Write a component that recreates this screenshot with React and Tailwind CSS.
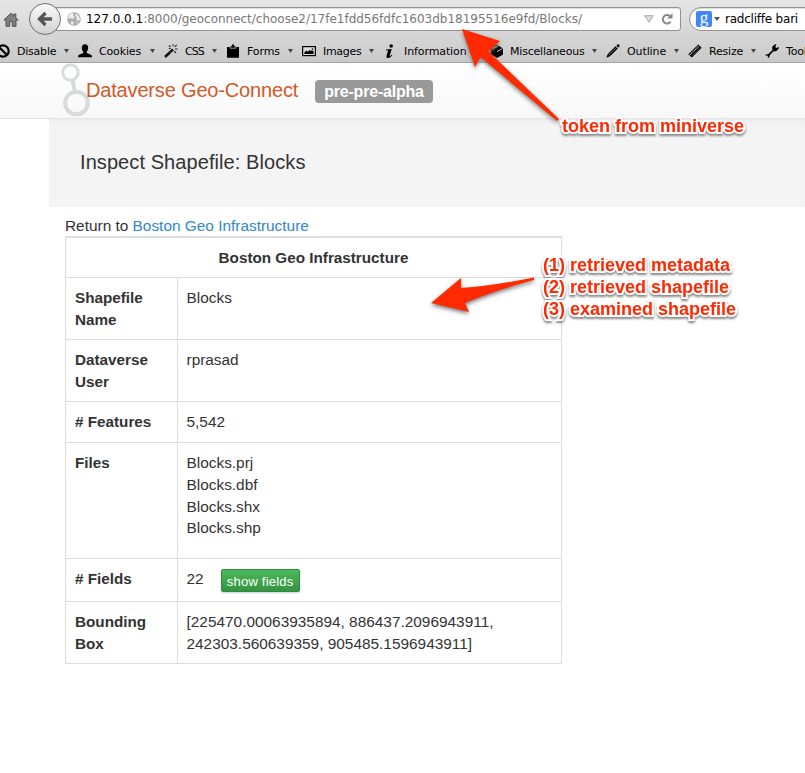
import React from "react";

const Svg = ({ children, className = "", ...rest }) => (
  <svg viewBox="0 0 14 14" width="14" height="14" className={"block shrink-0 overflow-visible " + className} {...rest}>
    {children}
  </svg>
);

const icons = {
  disable: (
    <Svg>
      <circle cx="7" cy="7" r="5.700" fill="none" stroke="#000" strokeWidth="2.200" />
      <path d="M3 3l8 8" stroke="#000" strokeWidth="2.200" />
    </Svg>
  ),
  cookies: (
    <Svg>
      <path d="M7 .2C9 .2 10.300 1.600 10.200 3.800 10.100 5.700 9.500 6.800 8.700 7.800V9L13 10.800C13.700 11.200 14 12 14 13.300H0C0 12 .3 11.200 1 10.800L5.300 9V7.800C4.500 6.800 3.900 5.700 3.800 3.800 3.700 1.600 5 .2 7 .2Z" />
    </Svg>
  ),
  css: (
    <Svg>
      <path d="M1 13L9 5.500" stroke="#111" strokeWidth="2.500" />
      <path d="M6.300 7.700l1.200 1.300" stroke="#ccc" strokeWidth=".7" />
      <path d="M9 .3v2M5 1.500l1.500 1.600M12.700.8l-2 2M11 5h2.600M10.200 7.200l1.800 1.800M4.800 4.500h1.800" stroke="#222" strokeWidth="1.100" />
    </Svg>
  ),
  forms: (
    <Svg>
      <path d="M1 3h2.500l.6 1.600h5.800L10.500 3H13v10.700H1zM4.500 3.800L4 2.500h1.700C5.700 1.200 6 .3 7 .3s1.300.9 1.300 2.200H10l-.5 1.300z" />
    </Svg>
  ),
  images: (
    <Svg>
      <rect x=".6" y="2.600" width="12.800" height="9" fill="#ddd" stroke="#000" strokeWidth="1.200" />
      <path d="M2.300 10V8.500l2-2 1.400 1.200 2-1.700 1.300 1 1-1 1.600 1.600V10z" />
      <circle cx="10.500" cy="5" r=".8" />
    </Svg>
  ),
  information: (
    <Svg>
      <circle cx="8.200" cy="2" r="1.800" />
      <path d="M3.200 5.600L8.800 4.900 6.700 11.300Q6.500 12.300 7.300 11.900L8.800 10.500 9.400 11C7.900 13 6.400 14 4.900 13.900 3.300 13.800 3.200 12.700 3.600 11.500L5.200 6.600 3 6.400Z" />
    </Svg>
  ),
  misc: (
    <Svg>
      <path d="M1.500 4.500L8 .5l6 4v6l-6 3.500-6.500-4z" />
      <path d="M3.500 4.800l6-3M8 7.500l5.500-3" stroke="#ddd" strokeWidth=".9" />
    </Svg>
  ),
  outline: (
    <Svg>
      <path d="M.3 13.800L1.800 10 9.500 2.300 11.800 4.600 4 12.200zM10.300 1.700L11.500.5Q12.500-.1 13.300.8 14 1.600 13.400 2.500L12.400 3.700z" />
      <path d="M2.800 10.800L10 3.600" stroke="#aaa" strokeWidth=".7" />
    </Svg>
  ),
  resize: (
    <Svg>
      <path d="M.3 10.200L10.300.6 13.700 3.800 3.800 13.600z" />
      <path d="M2 10.700L10.700 2.300" stroke="#ddd" strokeWidth="1.200" strokeDasharray="1 .8" />
      <path d="M4 11.800L12.500 3.700" stroke="#777" strokeWidth=".5" />
    </Svg>
  ),
  tools: (
    <Svg>
      <path d="M.5 10.800L3.700 9.700 7.500 6 7.100 3 9.500.6 11.500.2 10.200 2.700 11.500 4 13.800 2.800 13.500 5 11 7.200 8.500 7.200 5 10.700 4 13.800 2.600 13.500 2.900 11.900 2 11.300.7 12.100z" />
    </Svg>
  ),
};

const menu = [
  ["disable", "Disable", "w-[82px]", "tracking-[-0.22px]"],
  ["cookies", "Cookies", "w-[86px]", "tracking-[-0.15px]"],
  ["css", "CSS", "w-[62px]", "tracking-[-0.9px]"],
  ["forms", "Forms", "w-[76px]", "tracking-[-0.1px]"],
  ["images", "Images", "w-[81px]", "tracking-[-0.3px]"],
  ["information", "Information", "w-[106px]", "tracking-[-0.1px]"],
  ["misc", "Miscellaneous", "w-[117px]", "tracking-[-0.2px]"],
  ["outline", "Outline", "w-[82px]", "tracking-[-0.1px]"],
  ["resize", "Resize", "w-[77px]", "tracking-[-0.2px]"],
  ["tools", "Tools", "w-[80px]", "tracking-[-0.2px]"],
];

const Caret = () => (
  <svg width="5" height="4" viewBox="0 0 5 4" className="block shrink-0">
    <path d="M0 0h5L2.500 4z" fill="#444" />
  </svg>
);

function Browser() {
  return (
    <div className="h-[63px] shrink-0 overflow-hidden border-b border-[#a5a5a5] bg-linear-to-b from-[#e6e6e6] to-[#c9c9c9] font-['DejaVu_Sans',sans-serif] text-black">
      <div className="flex h-[38px] items-center">
        <svg width="16" height="15" viewBox="0 0 16 15" className="ml-[3px] shrink-0">
          <path d="M8 1.200L.8 8H3v6.300h3.700V9.500h2.600v4.800H13V8h2.200L12.800 5.700V2h-2v1.800z" fill="#808080" stroke="#505050" strokeWidth="1" />
        </svg>
        <div className="relative z-10 ml-[10px] flex size-8 shrink-0 items-center justify-center rounded-full border border-[#6f6f6f] bg-linear-to-b from-[#fafafa] to-[#d2d2d2]">
          <svg width="16" height="16" viewBox="0 0 16 16">
            <path d="M8.500 2L2.500 8l6 6M3 8h12" fill="none" stroke="#555" strokeWidth="3.300" />
          </svg>
        </div>
        <div className="-ml-[5px] flex h-6 w-[625px] shrink-0 items-center rounded-r-[3px] border border-[#929292] bg-white shadow-[inset_0_1px_1px_#ddd]">
          <svg width="14" height="14" viewBox="0 0 14 14" className="ml-[10px] shrink-0">
            <circle cx="7" cy="7" r="6.800" fill="#aaa" />
            <path d="M2 3l3-2 2 1-1 2 2 1-2 2-3-1-2 1zM9 2l3 2 1 4-2 1-2-2 1-2-2-1zM4 9l3 1-1 3-2-1zM9 10l2 0-1 2z" fill="#eee" />
          </svg>
          <span className="ml-[5px] w-[558px] whitespace-nowrap pt-[2px] text-[12px] tracking-[-0.01px] text-[#777]">
            <span className="text-black">127.0.0.1</span>:8000/geoconnect/choose2/17fe1fdd56fdfc1603db18195516e9fd/Blocks/
          </span>
          <svg width="10" height="8" viewBox="0 0 10 8" className="shrink-0">
            <path d="M.7.700h8.600L5 7.300z" fill="#ddd" stroke="#aaa" />
          </svg>
          <svg width="12" height="12" viewBox="0 0 12 12" className="ml-[7px] shrink-0">
            <path d="M9 3A4.300 4.300 0 1 0 9.800 8.500" fill="none" stroke="#888" strokeWidth="2" />
            <path d="M11.500 0v5.500H6z" fill="#888" />
          </svg>
        </div>
        <div className="ml-[8px] flex h-6 w-[150px] shrink-0 items-center rounded-l-full border border-[#929292] bg-white shadow-[inset_0_1px_1px_#ddd]">
          <span className="ml-[6px] flex size-4 items-center justify-center rounded-[2px] bg-[#4086f4] pb-[3px] font-['Liberation_Serif',serif] text-[17px] leading-none text-white">g</span>
          <svg width="6" height="4" viewBox="0 0 6 4" className="ml-[2px]"><path d="M0 0h6L3 4z" fill="#555" /></svg>
          <span className="ml-[5px] whitespace-nowrap pt-[2px] text-[12px] tracking-[-0.22px]">radcliffe bari</span>
        </div>
      </div>
      <div className="-ml-1 flex h-[26px] items-center">
        {menu.map(([key, label, width, tracking]) => (
          <div key={key} className={"flex shrink-0 items-center " + width}>
            {icons[key]}
            <span className={"ml-[7px] whitespace-nowrap pt-px text-[11px] " + tracking}>{label}</span>
            <span className="ml-auto mr-[9px]"><Caret /></span>
          </div>
        ))}
      </div>
    </div>
  );
}

const rows = [
  ["Shapefile Name", "h-[62px]", "Blocks"],
  ["Dataverse User", "h-[62px]", "rprasad"],
  ["# Features", "h-[41px]", "5,542"],
  ["Files", "h-[116px]", <>Blocks.prj<br />Blocks.dbf<br />Blocks.shx<br />Blocks.shp</>],
  ["# Fields", "h-[43px]", (
    <div className="flex">
      22
      <button className="ml-[17px] mt-[1px] flex h-[23px] w-[79px] items-center justify-center whitespace-nowrap rounded-[2px] border border-[#318a3a] bg-linear-to-b from-[#4fb85b] to-[#339342] pt-[2px] text-[13px] leading-[21px] tracking-[0.2px] text-white shadow-[0_1px_2px_#ccc]">show fields</button>
    </div>
  )],
  ["Bounding Box", "h-[62px]", <>[225470.00063935894, 886437.2096943911,<br />242303.560639359, 905485.1596943911]</>],
];

const note =
  "absolute whitespace-nowrap font-bold text-[#fc2a05] text-[18px] leading-[22px] [paint-order:stroke_fill] [-webkit-text-stroke:4px_white] [filter:drop-shadow(0_2px_1px_#888)]";

export default function App() {
  return (
    <div className="relative flex h-[773px] w-[805px] flex-col overflow-hidden bg-white font-['Liberation_Sans',sans-serif] text-[15.400px] leading-[21.800px] text-[#333]">
      <Browser />
      <header className="flex h-[56px] shrink-0 items-start border-b border-[#e4e4e4] bg-linear-to-b from-white to-[#f8f8f8] pl-[60px]">
        <svg width="30" height="54" viewBox="0 0 30 54" className="shrink-0" fill="none" stroke="#d7dbda">
          <circle cx="10.500" cy="9.500" r="7.700" strokeWidth="3" />
          <path d="M12.500 17l2.500 12" strokeWidth="4" />
          <circle cx="16.500" cy="40" r="11.300" strokeWidth="4" />
        </svg>
        <h1 className="-ml-[4px] mt-[16px] w-[229px] whitespace-nowrap text-[20px] leading-[22px] tracking-[-0.17px] text-[#cf5a28]">Dataverse Geo-Connect</h1>
        <span className="mt-[17px] flex h-[23px] w-[118px] items-center justify-center rounded-[4px] bg-[#999] text-[16px] font-bold tracking-[-0.2px] text-white">pre-pre-alpha</span>
      </header>
      <section className="ml-[49px] h-[88px] shrink-0 bg-[#f4f4f4] pl-[31px] pt-[32px] shadow-[inset_0_5px_5px_-3px_#e9e9e9]">
        <h2 className="text-[20px] leading-[22px] tracking-[0.08px]">Inspect Shapefile: Blocks</h2>
      </section>
      <main className="ml-[65px] mt-[8px]">
        <p className="h-[21px] whitespace-nowrap">Return to <a className="text-[#3188cc]">Boston Geo Infrastructure</a></p>
        <div className="w-[497px] border-x border-b border-t-2 border-[#ddd]">
          <div className="h-[39px] pt-[9px] text-center text-[15.250px] font-bold">Boston Geo Infrastructure</div>
          {rows.map(([label, height, value]) => (
            <div key={label} className={"flex border-t border-[#ddd] " + height}>
              <div className="w-[112px] shrink-0 border-r border-[#ddd] pl-[9px] pr-[20px] pt-[9px] text-[15.250px] font-bold">{label}</div>
              <div className="whitespace-nowrap pl-[8.500px] pt-[9px]">{value}</div>
            </div>
          ))}
        </div>
      </main>

      <svg className="absolute inset-0 z-20 [filter:drop-shadow(0_2px_2px_#777)]" width="805" height="773" viewBox="0 0 805 773" fill="#ff2a00">
        <path d="M462 29L500 41 488.500 51.500 559 119 557 121 480.500 57 475 67Z" />
        <path d="M431 303L461 278 461 288Q492 286 534 277.500L534 280Q496 290 465 303L469 312Z" />
      </svg>
      <div className={note + " left-[562px] top-[115px] z-30"}>token from miniverse</div>
      <div className={note + " left-[543px] top-[254px] z-30"}>(1) retrieved metadata<br />(2) retrieved shapefile<br />(3) examined shapefile</div>
    </div>
  );
}
